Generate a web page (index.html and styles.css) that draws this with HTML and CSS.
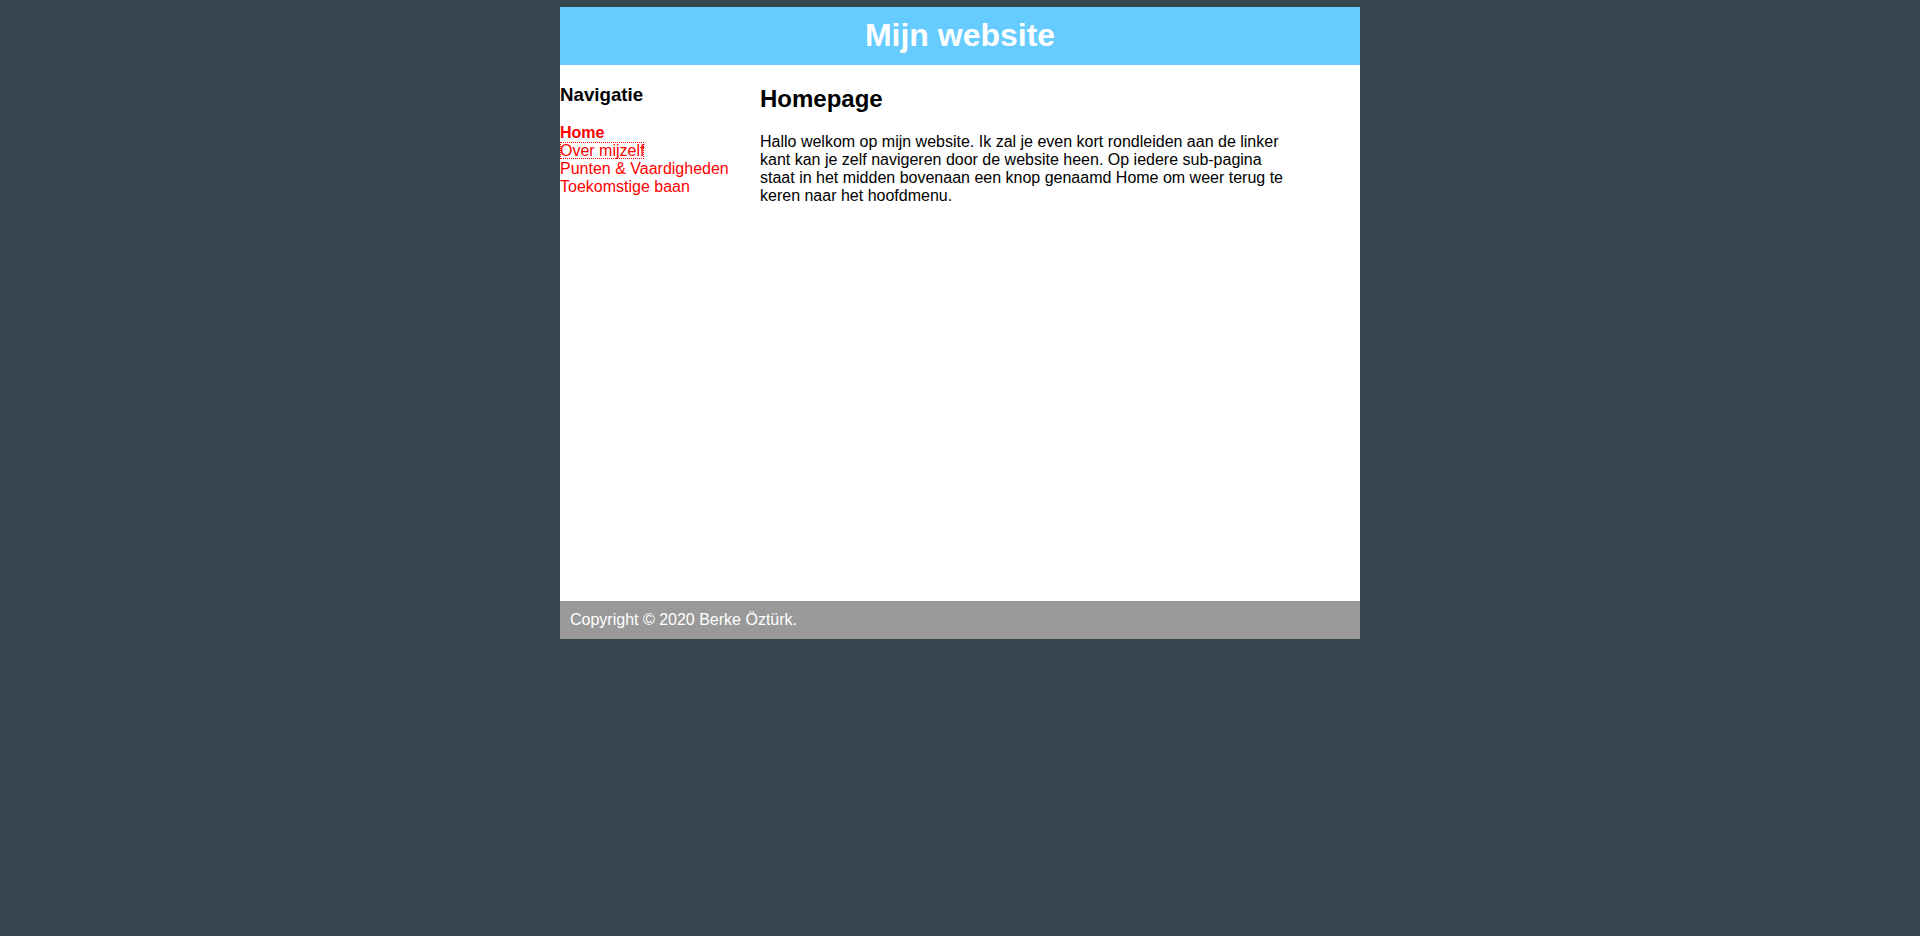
FILE: index.html
```html
<!DOCTYPE html>
<html lang="nl">
<head>
<meta charset="utf-8">
<title>Mijn website</title>
<link rel="stylesheet" href="styles.css">
</head>
<body>
<div class="wrapper">
  <header class="site-header">
    <h1 class="site-title">Mijn website</h1>
  </header>
  <div class="site-body">
    <nav class="side-nav">
      <h3 class="nav-title">Navigatie</h3>
      <div class="nav-links">
        <a class="nav-link active" href="#">Home</a><br>
        <a class="nav-link focused" href="#">Over mijzelf</a><br>
        <a class="nav-link" href="#">Punten &amp; Vaardigheden</a><br>
        <a class="nav-link" href="#">Toekomstige baan</a>
      </div>
    </nav>
    <main class="main-content">
      <h2 class="page-title">Homepage</h2>
      <p class="intro">Hallo welkom op mijn website. Ik zal je even kort rondleiden aan de linker kant kan je zelf navigeren door de website heen. Op iedere sub-pagina staat in het midden bovenaan een knop genaamd Home om weer terug te keren naar het hoofdmenu.</p>
    </main>
  </div>
  <footer class="site-footer">Copyright © 2020 Berke Öztürk.</footer>
</div>
</body>
</html>
```
FILE: styles.css
```css
html, body {
  margin: 0;
  padding: 0;
}
body {
  background: #37474f;
  font-family: Arial, "Liberation Sans", sans-serif;
  font-size: 16px;
  color: #000;
}
.wrapper {
  width: 800px;
  margin: 7px auto 0;
  background: #fff;
}
.site-header {
  background: #66ccff;
  padding: 10px 0 11px;
}
.site-title {
  margin: 0;
  color: #fff;
  text-align: center;
  font-size: 32px;
  line-height: 37px;
  font-weight: bold;
}
.site-body {
  display: flex;
  min-height: 536px;
}
.side-nav {
  width: 200px;
  flex: 0 0 200px;
}
.nav-title {
  font-size: 18.72px;
  font-weight: bold;
  margin: 18.72px 0;
}
.nav-links {
  line-height: normal;
}
.nav-link {
  color: #ff0000;
  text-decoration: none;
}
.nav-link.active {
  font-weight: bold;
}
.nav-link.focused {
  outline: 1px dotted #ff0000;
  outline-offset: -1px;
}
.main-content {
  width: 540px;
}
.page-title {
  font-size: 24px;
  font-weight: bold;
  margin: 19.92px 0;
}
.intro {
  margin: 16px 0;
}
.site-footer {
  background: #999999;
  color: #fff;
  padding: 10px;
}
```
